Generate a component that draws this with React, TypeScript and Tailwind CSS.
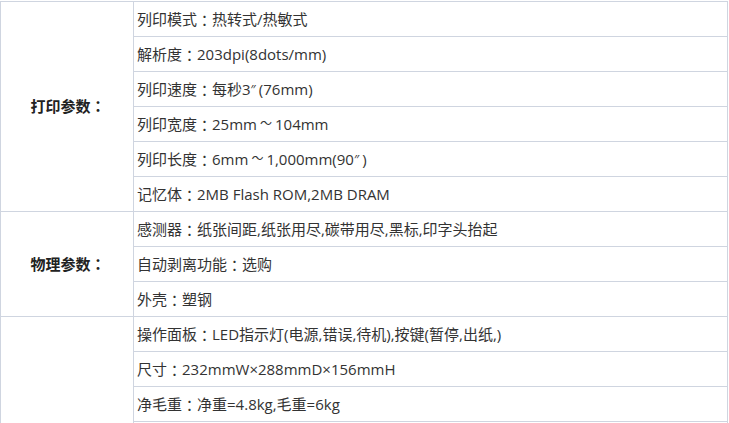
import React from "react";

type Group = { label: string; rows: string[] };

const groups: Group[] = [
  {
    label: "打印参数：",
    rows: [
      "列印模式：热转式/热敏式",
      "解析度：203dpi(8dots/mm)",
      "列印速度：每秒3″(76mm)",
      "列印宽度：25mm～104mm",
      "列印长度：6mm～1,000mm(90″)",
      "记忆体：2MB Flash ROM,2MB DRAM",
    ],
  },
  {
    label: "物理参数：",
    rows: [
      "感测器：纸张间距,纸张用尽,碳带用尽,黑标,印字头抬起",
      "自动剥离功能：选购",
      "外壳：塑钢",
    ],
  },
  {
    label: "",
    rows: [
      "操作面板：LED指示灯(电源,错误,待机),按键(暂停,出纸,)",
      "尺寸：232mmW×288mmD×156mmH",
      "净毛重：净重=4.8kg,毛重=6kg",
      "",
    ],
  },
];

function Rich({ text }: { text: string }) {
  const parts = text.split(/(：|～|″)/);
  return (
    <>
      {parts.map((p, i) => {
        if (p === "：")
          return (
            <span key={i} style={{ fontFamily: '"Noto Sans CJK TC", sans-serif' }}>
              ：
            </span>
          );
        if (p === "～")
          return (
            <span key={i} className="mx-[3px] text-[12px]">
              ～
            </span>
          );
        if (p === "″")
          return (
            <span key={i} className="mr-[3px] text-[13px]">
              ″
            </span>
          );
        return <React.Fragment key={i}>{p}</React.Fragment>;
      })}
    </>
  );
}

export default function App() {
  return (
    <div
      className="h-[423px] w-[729px] overflow-hidden bg-white pt-[1px] text-[15px] text-[#333333]"
      style={{ fontFamily: '"Open Sans", "Noto Sans CJK SC", sans-serif' }}
    >
      <div className="w-[728px] border-t border-r border-l border-[#cfd5e0]">
        {groups.map((g, gi) => (
          <div key={gi} className="flex">
            <div className="flex w-[133px] shrink-0 items-center justify-center border-r border-b border-[#cfd5e0] font-bold text-[#222222]">
              <span className="pl-[2px]">
                <Rich text={g.label} />
              </span>
            </div>
            <div className="flex flex-1 flex-col">
              {g.rows.map((r, ri) => (
                <div
                  key={ri}
                  className="flex h-[35px] items-center border-b border-[#cfd5e0] pl-[3px] leading-none whitespace-nowrap"
                >
                  <Rich text={r} />
                </div>
              ))}
            </div>
          </div>
        ))}
      </div>
    </div>
  );
}
